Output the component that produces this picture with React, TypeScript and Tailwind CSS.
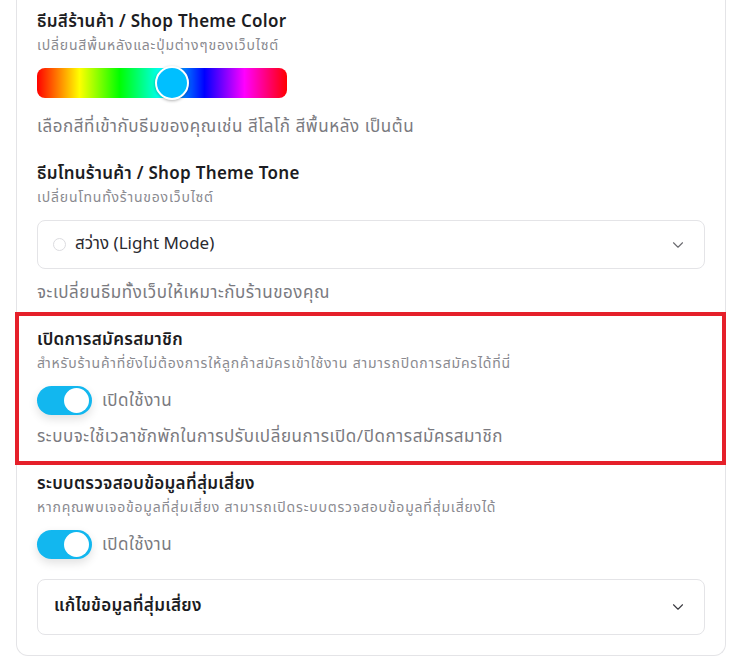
import React from "react";
import { ChevronDown } from "lucide-react";

const font = { fontFamily: '"Noto Sans Thai", "Noto Sans", Inter, "Liberation Sans", sans-serif' };

const Toggle = ({ on = true }: { on?: boolean }) => (
  <div className="flex items-center gap-[10px]">
    <div
      className={
        "relative h-[29px] w-[55px] rounded-full shadow-[0_4px_10px_rgba(0,0,0,0.12)] " +
        (on ? "bg-[#12b7ef]" : "bg-gray-300")
      }
    >
      <div className="absolute right-[3px] top-[2px] h-[25px] w-[25px] rounded-full bg-white" />
    </div>
    <span className="text-[17px] leading-6 tracking-[0.5px] text-[#7a7a80]">เปิดใช้งาน</span>
  </div>
);

const SectionTitle = ({ title, sub }: { title: string; sub: string }) => (
  <div>
    <div className="text-[17px] font-semibold leading-6 tracking-[0.3px] text-[#1c1c22]">{title}</div>
    <div className="mt-[2px] text-[14px] leading-5 tracking-[0.8px] text-[#8a8a90]">{sub}</div>
  </div>
);

export default function App() {
  return (
    <div className="min-h-[666px] bg-white" style={font}>
      <div className="ml-[16px] mr-[17px] rounded-b-xl border-x border-b border-[#e4e4e7] px-[20px] pb-[20px] pt-[10px]">
        {/* theme colour */}
        <SectionTitle title="ธีมสีร้านค้า / Shop Theme Color" sub="เปลี่ยนสีพื้นหลังและปุ่มต่างๆของเว็บไซต์" />
        <div className="relative mt-[12px] h-[30px] w-[250px] rounded-[8px] bg-[linear-gradient(to_right,#ff0000_0%,#ffff00_17%,#00ff00_33%,#00ffff_50%,#0000ff_67%,#ff00ff_83%,#ff0000_100%)]">
          <div className="absolute left-[118px] top-[-2px] h-[34px] w-[34px] rounded-full border-2 border-white bg-[#00bfff] shadow-[0_1px_3px_rgba(0,0,0,0.3)]" />
        </div>
        <div className="mt-[17px] text-[17px] leading-6 tracking-[0.55px] text-[#7a7a80]">
          เลือกสีที่เข้ากับธีมของคุณเช่น สีโลโก้ สีพื้นหลัง เป็นต้น
        </div>

        {/* theme tone */}
        <div className="mt-[23px]">
          <SectionTitle title="ธีมโทนร้านค้า / Shop Theme Tone" sub="เปลี่ยนโทนทั้งร้านของเว็บไซต์" />
        </div>
        <div className="mt-[12px] flex h-[49px] items-center justify-between rounded-[8px] border border-[#e4e4e7] pl-[15px] pr-[17px]">
          <div className="flex items-center gap-[9px]">
            <div className="h-[13px] w-[13px] rounded-full border border-[#dcdce0]" />
            <span className="text-[17px] text-[#2a2a30]">สว่าง (Light Mode)</span>
          </div>
          <ChevronDown size={18} strokeWidth={1.5} className="text-[#6b6b70]" />
        </div>
        <div className="mt-[12px] text-[17px] leading-6 tracking-[0.55px] text-[#7a7a80]">
          จะเปลี่ยนธีมทั้งเว็บให้เหมาะกับร้านของคุณ
        </div>

        {/* signup (highlighted) */}
        <div className="-ml-[22px] -mr-[21px] mt-[7px] border-4 border-[#e5202a] pb-[12px] pl-[18px] pr-[17px] pt-[12px]">
          <SectionTitle
            title="เปิดการสมัครสมาชิก"
            sub="สำหรับร้านค้าที่ยังไม่ต้องการให้ลูกค้าสมัครเข้าใช้งาน สามารถปิดการสมัครได้ที่นี่"
          />
          <div className="mt-[12px]">
            <Toggle />
          </div>
          <div className="mt-[10px] text-[17px] leading-6 tracking-[0.55px] text-[#7a7a80]">
            ระบบจะใช้เวลาชักพักในการปรับเปลี่ยนการเปิด/ปิดการสมัครสมาชิก
          </div>
        </div>

        {/* risky data */}
        <div className="mt-[7px]">
          <SectionTitle
            title="ระบบตรวจสอบข้อมูลที่สุ่มเสี่ยง"
            sub="หากคุณพบเจอข้อมูลที่สุ่มเสี่ยง สามารถเปิดระบบตรวจสอบข้อมูลที่สุ่มเสี่ยงได้"
          />
        </div>
        <div className="mt-[12px]">
          <Toggle />
        </div>
        <div className="mt-[20px] flex h-[56px] items-center justify-between rounded-[8px] border border-[#e4e4e7] pl-[16px] pr-[17px]">
          <span className="text-[17px] font-semibold tracking-[0.3px] text-[#1c1c22]">แก้ไขข้อมูลที่สุ่มเสี่ยง</span>
          <ChevronDown size={18} strokeWidth={1.5} className="text-[#3a3a40]" />
        </div>
      </div>
    </div>
  );
}
